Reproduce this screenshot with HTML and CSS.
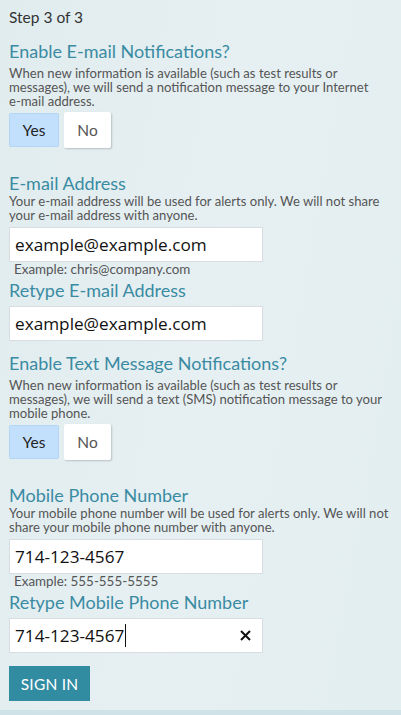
FILE: index.html
```html
<!DOCTYPE html>
<html>
<head>
<meta charset="utf-8">
<link rel="stylesheet" href="styles.css">
</head>
<body>
<div class="page">
  <div class="step">Step 3 of 3</div>

  <section class="group toggle-group">
    <h2 class="label">Enable E-mail Notifications?</h2>
    <p class="help">When new information is available (such as test results or messages), we will send a notification message to your Internet e&#8209;mail address.</p>
    <div class="toggle">
      <button class="opt opt-yes">Yes</button>
      <button class="opt opt-no">No</button>
    </div>
  </section>

  <section class="group field-group">
    <h2 class="label">E-mail Address</h2>
    <p class="help">Your e-mail address will be used for alerts only. We will not share your e-mail address with anyone.</p>
    <div class="input"><span class="value">example@example.com</span></div>
    <div class="example">Example: chris@company.com</div>
  </section>

  <section class="group retype-group">
    <h2 class="label">Retype E-mail Address</h2>
    <div class="input"><span class="value">example@example.com</span></div>
  </section>

  <section class="group toggle-group">
    <h2 class="label">Enable Text Message Notifications?</h2>
    <p class="help">When new information is available (such as test results or messages), we will send a text (SMS) notification message to your mobile phone.</p>
    <div class="toggle">
      <button class="opt opt-yes">Yes</button>
      <button class="opt opt-no">No</button>
    </div>
  </section>

  <section class="group field-group">
    <h2 class="label">Mobile Phone Number</h2>
    <p class="help">Your mobile phone number will be used for alerts only. We will not share your mobile phone number with anyone.</p>
    <div class="input"><span class="value">714-123-4567</span></div>
    <div class="example">Example: 555-555-5555</div>
  </section>

  <section class="group retype-group last">
    <h2 class="label">Retype Mobile Phone Number</h2>
    <div class="input"><span class="value">714-123-4567</span><span class="caret"></span>
      <svg class="clear" width="11" height="11" viewBox="0 0 11 11"><path d="M1 1 L10 10 M10 1 L1 10" stroke="#111" stroke-width="2" fill="none"/></svg>
    </div>
  </section>

  <button class="signin">SIGN IN</button>
</div>
<div class="bottom-strip"></div>
</body>
</html>
```

FILE: styles.css
```css
* { box-sizing: border-box; }
html, body { margin: 0; padding: 0; }
body {
  width: 401px;
  height: 715px;
  overflow: hidden;
  background: linear-gradient(100deg, #e1ecef 0%, #e6f0f3 50%, #e3eef1 100%);
  font-family: Lato, "Noto Sans", sans-serif;
  color: #555;
  display: flex;
  flex-direction: column;
}
.page {
  flex: 1;
  padding: 8px 9px 0 9px;
  display: flex;
  flex-direction: column;
  align-items: flex-start;
}
.step {
  font-size: 15.5px;
  line-height: 18px;
  color: #333;
  margin-bottom: 14px;
}
.group { width: 100%; }
.label {
  margin: 0;
  font-weight: normal;
  font-size: 18px;
  line-height: 22px;
  color: #3a8ba2;
}
.help {
  margin: 0;
  font-size: 13.1px;
  line-height: 14px;
  color: #555;
}
.toggle-group .help { margin-top: 4px; }
.toggle {
  display: flex;
  gap: 5px;
  margin-top: 4px;
  height: 36px;
  align-items: center;
}
.toggle-group { margin-bottom: 24px; }
.opt {
  font-family: Lato, "Noto Sans", sans-serif;
  font-size: 15.5px;
  padding: 0;
  cursor: pointer;
}
.opt-yes {
  width: 50px;
  height: 34px;
  background: #c2e0fc;
  color: #222;
  border: 1px solid #b4d5f3;
  border-radius: 2px;
}
.opt-no {
  width: 47px;
  height: 36px;
  background: #fff;
  color: #555;
  border: none;
  border-radius: 2px;
  box-shadow: 1px 1px 2px rgba(0,0,0,0.2);
}
.input {
  width: 254px;
  height: 35px;
  margin-top: 5px;
  background: #fff;
  border: 1px solid #d9dddf;
  display: flex;
  align-items: center;
  padding: 0 5px;
}
.value {
  font-family: "Open Sans", "Noto Sans", sans-serif;
  font-size: 17.2px;
  color: #111;
}
.caret {
  display: inline-block;
  width: 1px;
  height: 23px;
  background: #111;
  margin-left: 1px;
}
.clear {
  margin-left: auto;
  margin-right: 6px;
}
.example {
  font-size: 13.4px;
  line-height: 12px;
  color: #555;
  padding-left: 5px;
  padding-top: 1px;
  margin-bottom: 4px;
}
.retype-group { margin-bottom: 11px; }
.retype-group.last { margin-bottom: 13px; }
.signin {
  width: 81px;
  height: 35px;
  background: #318ba1;
  color: #fff;
  border: none;
  font-family: Lato, "Noto Sans", sans-serif;
  font-size: 15.5px;
  letter-spacing: 0.2px;
  padding: 0;
}
.bottom-strip {
  height: 5px;
  background: #cfe2e8;
}
```
